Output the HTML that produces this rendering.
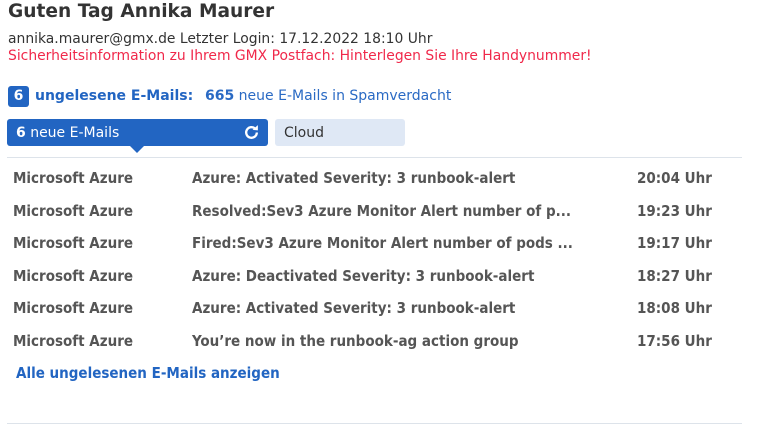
<!DOCTYPE html>
<html><head><meta charset="utf-8"><style>
body{margin:0;width:758px;height:426px;background:#fff;font-family:"DejaVu Sans","Liberation Sans",sans-serif;position:relative;overflow:hidden;color:#333}
.a{position:absolute;white-space:nowrap}
h1{position:absolute;left:8px;top:1px;margin:0;font-size:18.6px;font-weight:bold;color:#333}
.row{position:absolute;left:13px;font-family:"DejaVu Sans Condensed","DejaVu Sans",sans-serif;font-weight:bold;font-size:15px;color:#555;width:720px;height:20px}
.row span{position:absolute;top:0}
</style></head><body>
<h1>Guten Tag Annika Maurer</h1>
<div class="a" style="left:8px;top:31px;font-size:13.9px;color:#333">annika.maurer@gmx.de Letzter Login: 17.12.2022 18:10 Uhr</div>
<div class="a" style="left:8px;top:48px;font-size:13.9px;color:#f0284a">Sicherheitsinformation zu Ihrem GMX Postfach: Hinterlegen Sie Ihre Handynummer!</div>
<div class="a" style="left:8px;top:86px;width:21px;height:21px;background:#2265c2;border-radius:3px;color:#fff;font-weight:bold;font-size:14px;text-align:center;line-height:21px">6</div>
<div class="a" style="left:35px;top:88px;font-size:14px;color:#2265c2;font-weight:bold">ungelesene E-Mails:</div>
<div class="a" style="left:205px;top:88px;font-size:14px;color:#2a6ac4"><b>665</b> neue E-Mails in Spamverdacht</div>
<div class="a" style="left:7px;top:119px;width:261px;height:27px;background:#2265c2;border-radius:3px"></div>
<div class="a" style="left:130px;top:146px;width:0;height:0;border-left:7px solid transparent;border-right:7px solid transparent;border-top:7px solid #2265c2"></div>
<div class="a" style="left:16px;top:125px;font-size:14px;color:#fff"><b>6</b> neue E-Mails</div>
<svg class="a" style="left:243px;top:124px" width="17" height="17" viewBox="0 0 16 16"><path d="M13 8a5 5 0 1 1-1.5-3.6" fill="none" stroke="#fff" stroke-width="2.2"/><path d="M9 5.5L14 6V1z" fill="#fff"/></svg>
<div class="a" style="left:275px;top:119px;width:130px;height:27px;background:#dfe8f5;border-radius:3px"></div>
<div class="a" style="left:284px;top:125px;font-size:14px;color:#333">Cloud</div>
<div class="a" style="left:7px;top:157px;width:735px;height:1px;background:#dde3ea"></div>
<div class="row" style="top:169px"><span style="left:0">Microsoft Azure</span><span style="left:179px">Azure: Activated Severity: 3 runbook-alert</span><span style="left:624px">20:04 Uhr</span></div>
<div class="row" style="top:202px"><span style="left:0">Microsoft Azure</span><span style="left:179px">Resolved:Sev3 Azure Monitor Alert number of p...</span><span style="left:624px">19:23 Uhr</span></div>
<div class="row" style="top:234px"><span style="left:0">Microsoft Azure</span><span style="left:179px">Fired:Sev3 Azure Monitor Alert number of pods ...</span><span style="left:624px">19:17 Uhr</span></div>
<div class="row" style="top:267px"><span style="left:0">Microsoft Azure</span><span style="left:179px">Azure: Deactivated Severity: 3 runbook-alert</span><span style="left:624px">18:27 Uhr</span></div>
<div class="row" style="top:299px"><span style="left:0">Microsoft Azure</span><span style="left:179px">Azure: Activated Severity: 3 runbook-alert</span><span style="left:624px">18:08 Uhr</span></div>
<div class="row" style="top:332px"><span style="left:0">Microsoft Azure</span><span style="left:179px">You’re now in the runbook-ag action group</span><span style="left:624px">17:56 Uhr</span></div>
<div class="row" style="top:364px;left:16px;color:#2265c2"><span style="left:0">Alle ungelesenen E-Mails anzeigen</span></div>
<div class="a" style="left:7px;top:423px;width:735px;height:1px;background:#dde3ea"></div>
</body></html>
